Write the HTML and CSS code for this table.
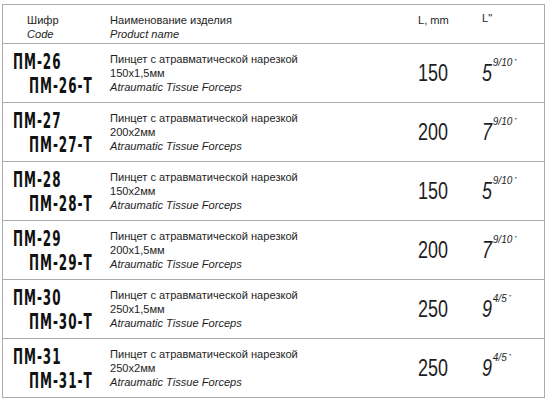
FILE: index.html
```html
<!DOCTYPE html>
<html>
<head>
<meta charset="utf-8">
<link rel="stylesheet" href="styles.css">
</head>
<body>
<div class="table">
  <div class="row head">
    <div class="c code"><div>Шифр</div><div class="i">Code</div></div>
    <div class="c name"><div>Наименование изделия</div><div class="i">Product name</div></div>
    <div class="c mm">L, mm</div>
    <div class="c inch"><span class="lq">L"</span></div>
  </div>
  <div class="row">
    <div class="c code"><div class="c1">ПМ-26</div><div class="c2">ПМ-26-Т</div></div>
    <div class="c name"><div>Пинцет с атравматической нарезкой</div><div>150x1,5мм</div><div class="i">Atraumatic Tissue Forceps</div></div>
    <div class="c mm"><span class="big">150</span></div>
    <div class="c inch"><span class="big it">5</span><span class="frac">9/10</span><span class="q">''</span></div>
  </div>
  <div class="row">
    <div class="c code"><div class="c1">ПМ-27</div><div class="c2">ПМ-27-Т</div></div>
    <div class="c name"><div>Пинцет с атравматической нарезкой</div><div>200x2мм</div><div class="i">Atraumatic Tissue Forceps</div></div>
    <div class="c mm"><span class="big">200</span></div>
    <div class="c inch"><span class="big it">7</span><span class="frac">9/10</span><span class="q">''</span></div>
  </div>
  <div class="row">
    <div class="c code"><div class="c1">ПМ-28</div><div class="c2">ПМ-28-Т</div></div>
    <div class="c name"><div>Пинцет с атравматической нарезкой</div><div>150x2мм</div><div class="i">Atraumatic Tissue Forceps</div></div>
    <div class="c mm"><span class="big">150</span></div>
    <div class="c inch"><span class="big it">5</span><span class="frac">9/10</span><span class="q">''</span></div>
  </div>
  <div class="row">
    <div class="c code"><div class="c1">ПМ-29</div><div class="c2">ПМ-29-Т</div></div>
    <div class="c name"><div>Пинцет с атравматической нарезкой</div><div>200x1,5мм</div><div class="i">Atraumatic Tissue Forceps</div></div>
    <div class="c mm"><span class="big">200</span></div>
    <div class="c inch"><span class="big it">7</span><span class="frac">9/10</span><span class="q">''</span></div>
  </div>
  <div class="row">
    <div class="c code"><div class="c1">ПМ-30</div><div class="c2">ПМ-30-Т</div></div>
    <div class="c name"><div>Пинцет с атравматической нарезкой</div><div>250x1,5мм</div><div class="i">Atraumatic Tissue Forceps</div></div>
    <div class="c mm"><span class="big">250</span></div>
    <div class="c inch"><span class="big it">9</span><span class="frac">4/5</span><span class="q">''</span></div>
  </div>
  <div class="row last">
    <div class="c code"><div class="c1">ПМ-31</div><div class="c2">ПМ-31-Т</div></div>
    <div class="c name"><div>Пинцет с атравматической нарезкой</div><div>250x2мм</div><div class="i">Atraumatic Tissue Forceps</div></div>
    <div class="c mm"><span class="big">250</span></div>
    <div class="c inch"><span class="big it">9</span><span class="frac">4/5</span><span class="q">''</span></div>
  </div>
</div>
</body>
</html>
```
FILE: styles.css
```css
html, body {
  margin: 0;
  padding: 0;
  background: #fff;
}
body {
  font-family: "Liberation Sans", Arial, sans-serif;
  font-size: 11px;
  line-height: 14px;
  color: #1e1e1e;
}
.table {
  margin: 4px 0 0 2px;
  width: 541px;
  border: 1px solid #ababab;
}
.row {
  display: grid;
  grid-template-columns: 107px 308px 62px 1fr;
  height: 58px;
  border-bottom: 1px solid #ababab;
}
.row.last {
  border-bottom: none;
}
.row.head {
  height: 38px;
  align-items: start;
}
.c {
  display: flex;
  flex-direction: column;
  justify-content: center;
}
.head .c {
  justify-content: flex-start;
  padding-top: 8px;
}
.head .code {
  padding-left: 24px;
}
.head .c, .name {
  font-size: 11.1px;
}
.i {
  font-style: italic;
}
.lq {
  position: relative;
  top: -2px;
}
.code {
  padding-left: 10px;
  padding-top: 1px;
  white-space: nowrap;
}
.c1, .c2 {
  font-family: "DejaVu Sans Condensed", "DejaVu Sans", sans-serif;
  font-stretch: condensed;
  font-weight: bold;
  font-size: 20.5px;
  line-height: 24px;
  letter-spacing: 1.5px;
  color: #111;
  transform: scaleX(0.65);
  transform-origin: left center;
}
.c2 {
  margin-left: 16px;
}
.mm, .inch {
  display: block;
  padding-top: 16px;
  font-size: 23px;
  line-height: 26px;
  white-space: nowrap;
}
.head .mm, .head .inch {
  font-size: 11.1px;
  line-height: 14px;
  padding-top: 8px;
}
.big {
  display: inline-block;
  transform: scaleX(0.78);
  transform-origin: left center;
}
.inch .big {
  margin-right: -3px;
}
.inch {
  padding-left: 2px;
}
.it {
  font-style: italic;
}
.frac {
  font-style: italic;
  font-size: 10px;
  line-height: 0;
  vertical-align: 15px;
  margin-left: 1px;
}
.q {
  font-style: italic;
  font-size: 7px;
  line-height: 0;
  vertical-align: 17px;
  margin-left: 2px;
  letter-spacing: -0.5px;
}
```
